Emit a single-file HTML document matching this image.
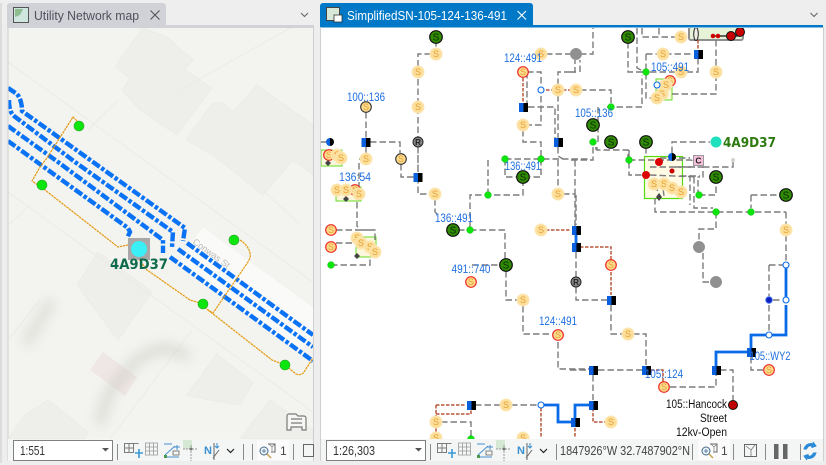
<!DOCTYPE html>
<html><head><meta charset="utf-8"><title>Map views</title>
<style>
html,body{margin:0;padding:0;background:#eeeeee;width:826px;height:465px;overflow:hidden}
svg{display:block;font-family:"Liberation Sans",sans-serif}
.d{fill:none;stroke:#7c7c7c;stroke-width:1.4;stroke-dasharray:6.5 3}
.b{fill:none;stroke:#b9573a;stroke-width:1.5;stroke-dasharray:3.5 1.5}
.u{fill:none;stroke:#0a6be8;stroke-width:2.8}
.c{fill:#fddf9c;stroke:#fde6b4;stroke-width:1;r:6px}
.r{fill:#fddc90;stroke:#ee2a20;stroke-width:1.2;r:5.3px}
.k{fill:#fddc90;stroke:#333;stroke-width:1.1;r:5.3px}
.g{fill:#2f8a04;stroke:#111;stroke-width:1.2;r:6.3px}
.gd{fill:#0ce60c;stroke:#19b819;stroke-width:.5;r:3.4px}
.gl{fill:#0ce60c;stroke:#2aa02a;stroke-width:.6}
.s{font-size:9px;fill:#e5a030;text-anchor:middle}
.sk{font-size:10px;fill:#0c2a00;text-anchor:middle}
.l{font-size:12px;fill:#1f6fe0;text-anchor:middle}
.t{font-size:11.5px;fill:#111;text-anchor:end}
.bl{fill:#0a5fdc}.bk{fill:#000}
.o{fill:#fff;stroke:#0a6be8;stroke-width:1.1}
.gr{fill:#909090;stroke:#999;stroke-width:.5;r:5.8px}
.dash{fill:none;stroke:#0a72f5;stroke-width:4.4;stroke-dasharray:9 2 3.500 2}
.or{fill:none;stroke:#e49a12;stroke-width:1.200;stroke-dasharray:2.500 .7}
.bd{fill:#eeeeea;stroke:#ebebe7;stroke-width:1}
.ic{fill:none;stroke:#7d7d7d;stroke-width:1}
.sep{stroke:#8a8a8a;stroke-width:1}
</style></head><body>
<svg width="826" height="465" viewBox="0 0 826 465" xmlns="http://www.w3.org/2000/svg">
<defs>
<clipPath id="lc"><rect x="8" y="28" width="305" height="411"/></clipPath>
<clipPath id="rc"><rect x="321" y="28" width="502" height="411"/></clipPath>
<filter id="bl" x="-40%" y="-40%" width="180%" height="180%"><feGaussianBlur stdDeviation="6"/></filter>
</defs>
<rect width="826" height="465" fill="#eeeeee"/>
<rect x="0" y="3" width="2" height="460" fill="#dcdcdc"/>

<!-- left tab -->
<path d="M7 25V6a3 3 0 0 1 3-3h153a3 3 0 0 1 3 3v19z" fill="#d1d2d8"/>
<rect x="7" y="25" width="307" height="3" fill="#d1d2d8"/>
<rect x="13.500" y="7.500" width="15" height="15" fill="#cfe6de" stroke="#555"/>
<path d="M15 9h8l-3 6-5 2z" fill="#8dbd8e"/>
<text x="34" y="20" font-size="13" fill="#50505c" textLength="105" lengthAdjust="spacingAndGlyphs">Utility Network map</text>
<path d="M150.500 10.500l9 9M159.500 10.500l-9 9" stroke="#555" stroke-width="1.100" fill="none"/>
<path d="M301 13l3.500 3.500 3.500-3.500" stroke="#666" stroke-width="1.100" fill="none"/>

<!-- left map -->
<rect x="8" y="28" width="305" height="411" fill="#f3f3ef"/>
<g clip-path="url(#lc)">
<path d="M190 245L313 335" stroke="#fafaf8" stroke-width="44" fill="none"/>
<polygon class="bd" points="143,28 167,37 193,60 185,70 212,88 177,135 140,110 122,90 130,78 115,67"/>
<polygon class="bd" points="213,103 223,103 233,112 257,85 313,125 313,175 293,160 263,195 213,155 186,140"/>
<polygon class="bd" points="98,252 152,292 118,340 77,285"/>
<polygon class="bd" points="217,354 253,383 240,405 210,400 187,395"/>
<polygon class="bd" points="48,400 88,432 85,439 8,439 25,415"/>
<polygon class="bd" points="270,400 313,430 313,439 240,439"/>
<polygon points="103,352 137,377 125,396 90,370" fill="#efe7e5"/>
<path d="M8 62L313 282M8 192L313 412M88 130L118 100M180 90L290 28M8 225L30 205M40 300L8 340M192 330L110 439M300 225L263 190" stroke="#e9e9e5" stroke-width=".8" fill="none"/>
<path d="M100 425Q105 390 125 375Q135 355 165 348L190 356" stroke="#bdbdb6" stroke-width="11" opacity=".4" fill="none" filter="url(#bl)"/>
<path d="M52 300L25 345" stroke="#bdbdb6" stroke-width="11" opacity=".35" fill="none" filter="url(#bl)"/>
<text transform="translate(192 243) rotate(36)" font-size="9" fill="#b9b9b9">Conwas St</text>
<path class="dash" d="M8 88L17 94Q22 100 22 111L93 162L185 228L183 241"/>
<path class="dash" d="M9 100Q9 112 14 116L75 162L173 232L172 247"/>
<path class="dash" d="M8 126L58 162L163 240L163 253"/>
<path class="dash" d="M8 141L37 162L128 228L130 232L127 238"/>
<path class="dash" d="M187 243L313 335"/>
<path class="dash" d="M178 249L313 347"/>
<path class="dash" d="M170 257L313 361"/>
<path class="or" d="M77 121L73 117L47 158L40 167L32 181L45 190L118 247L128 245L147 270L190 300L200 303L208 310L213 313L248 262Q251 257 250 253Q248 245 240 240"/>
<path class="or" d="M208 310L272 360L285 365L296 374Q301 376 304 372L313 358"/>
<circle class="gl" cx="79" cy="126" r="5"/><circle class="gl" cx="42" cy="185" r="5"/>
<circle class="gl" cx="234" cy="240" r="5"/><circle class="gl" cx="203" cy="304" r="5"/><circle class="gl" cx="285" cy="365" r="5"/>
<rect x="128" y="238" width="22" height="22" fill="#a8a8a8"/>
<circle cx="139" cy="249" r="8" fill="#38f0f5"/>
<text x="110" y="269" font-size="14.500" font-weight="bold" fill="#0e6b4c" style="font-family:'DejaVu Sans',sans-serif" textLength="58" lengthAdjust="spacingAndGlyphs">4A9D37</text>
<path d="M287 430v-14a2 2 0 0 1 2-2h7l2 2h6a2 2 0 0 1 2 2v12h-4v-3h-11v3zM291 419h11M291 423h11" fill="#f6f6f4" stroke="#7a7a7a" stroke-width="1.200"/>
</g>
<rect x="7.500" y="28" width="1" height="433" fill="#cfcfcf"/><rect x="313" y="28" width="1" height="433" fill="#cfcfcf"/>

<!-- right tab -->
<path d="M320 25V6a3 3 0 0 1 3-3h207a3 3 0 0 1 3 3v19z" fill="#0078c8"/>
<rect x="320" y="25" width="503" height="2.500" fill="#0078c8"/>
<rect x="326.500" y="7.500" width="13" height="13" fill="#d8e8d8" stroke="#444"/>
<rect x="334" y="15" width="8" height="7" fill="#fff" stroke="#333" stroke-width=".8"/>
<text x="347" y="20" font-size="13" fill="#fff" textLength="160" lengthAdjust="spacingAndGlyphs">SimplifiedSN-105-124-136-491</text>
<path d="M517.500 11l8.500 8.500M526 11l-8.500 8.500" stroke="#fff" stroke-width="1.100" fill="none"/>
<path d="M810.500 13l3.500 3.500 3.500-3.500" stroke="#666" stroke-width="1.100" fill="none"/>

<!-- right map -->
<rect x="321" y="27.500" width="502" height="412" fill="#fff"/>
<g clip-path="url(#rc)">
<rect x="321" y="150" width="21" height="16" fill="#fbf6dc" stroke="#66dd22"/>
<rect x="336" y="187" width="25" height="14" fill="#fbf6dc" stroke="#66dd22"/>
<rect x="356" y="237" width="20" height="20" fill="#fbf6dc" stroke="#66dd22"/>
<rect x="656" y="79" width="16" height="21" fill="#fbf6dc" stroke="#66dd22"/>
<rect x="644.500" y="156.500" width="38" height="42" fill="#fffbe4" stroke="#55dd11" stroke-width="1.200"/>
<rect x="689" y="27" width="54" height="13" rx="2" fill="#e6f3d6" stroke="#8f8f8f" stroke-width="2"/>

<path class="d" d="M436 40V54H418V172M418 177V194H435M435 199V212L437 214M418 147V172"/>
<path class="d" d="M366 112V138M366 146V154M370 142H400V153M401 164V177H414"/>
<path class="d" d="M359 163V187M364 159H359M357 202V226L360 230H375V243M336 230H375M336 243H355M331 265H370V257M321 142H326"/>
<path class="d" d="M546 54H572M527 72V105M527 72H541V125H528M523 130V142H541V158M528 107H555V138"/>
<path class="d" d="M558 95V138M558 85V72H575V60M505 159H590M558 147V156L563 159M488 160V194M470 228V195H523V183M505 159V177H518M541 159V177H530"/>
<path class="d" d="M558 160V190M563 194H575V226M575 160V194M576 195V225M576 252V277M576 287V300H607"/>
<path class="d" d="M458 230H466M470 230H505V260M472 265H500M506 271V300H518M523 306V334H551M558 342V369H592"/>
<path class="d" d="M580 54H593V28M580 72V60M570 72H576M580 90H611V103M607 107H642V75M598 107V142M596 150V147M597 147V150H628V159M593 147V160H570M629 150V160"/>
<path class="d" d="M628 42V72H645M637 28V68L645 72M642 28V37H676M659 28V35M646 54H693M646 54V98H652M698 58V72H687M650 72H676M672 94H716V78M716 40V67"/>
<path class="d" d="M646 147V157M672 153V142H710M629 160H690L703 162M629 162V175H646M650 175L700 177M650 167H703V180M703 167H733V162M660 158H690"/>
<path class="d" d="M694 177V208H713M699 195H716V183M690 175V205M698 180V195M655 198V212H786M751 195H781M751 195V208M786 212V225M786 235V262M716 212V229H699V242M703 253V282H710"/>
<path class="d" d="M769 265H783M769 265V296M773 300H782M769 305V332M751 357V370H763M720 370H733V400M670 387H716V373"/>
<path class="d" d="M611 305V334H623M633 334H646V365M570 370H589M598 370H642M593 375V400M475 405H501M511 405H538M441 422H471V437"/>
<path class="d" d="M655 185L660 196M662 180L664 196M675 167H695M680 176H700"/>

<path class="b" d="M523 78V103M546 90H553M563 90H570M546 230H571M580 247H611V260M611 272V295M698 40V50M651 370H663V383M593 408V422H605M575 428V438M436 405H466M436 405V417M436 414H471V408M436 428V433M541 408V438"/>
<path class="u" d="M576 233V244M786 268V297M786 305V335H751V352H716V368M541 405H558V422H575V405H593"/>

<circle class="g" cx="436" cy="37" r="6"/><text class="sk" x="436" y="40.500">S</text>
<circle class="g" cx="628" cy="37" r="6"/><text class="sk" x="628" y="40.500">S</text>
<circle class="g" cx="523" cy="177" r="6"/><text class="sk" x="523" y="180.500">S</text>
<circle class="g" cx="453" cy="230" r="6"/><text class="sk" x="453" y="233.500">S</text>
<circle class="g" cx="506" cy="265" r="6"/><text class="sk" x="506" y="268.500">S</text>
<circle class="g" cx="593" cy="125" r="6"/><text class="sk" x="593" y="128.500">S</text>
<circle class="g" cx="611" cy="142" r="6"/><text class="sk" x="611" y="145.500">S</text>
<circle class="g" cx="646" cy="142" r="6"/><text class="sk" x="646" y="145.500">S</text>
<circle class="g" cx="716" cy="177" r="6"/><text class="sk" x="716" y="180.500">S</text>
<circle class="g" cx="786" cy="195" r="6"/><text class="sk" x="786" y="198.500">S</text>

<circle class="gr" cx="576" cy="54" r="5.500"/><circle class="gr" cx="699" cy="247" r="5.500"/><circle class="gr" cx="716" cy="282" r="5.500"/>
<circle cx="418" cy="142" r="5" fill="#888" stroke="#222"/><text x="418" y="145" font-size="8" text-anchor="middle" font-weight="bold" fill="#222">R</text>
<circle cx="576" cy="282" r="5" fill="#888" stroke="#222"/><text x="576" y="285" font-size="8" text-anchor="middle" font-weight="bold" fill="#222">R</text>

<circle class="c" cx="436" cy="54" r="5.500"/><text class="s" x="436" y="57">S</text>
<circle class="c" cx="418" cy="72" r="5.500"/><text class="s" x="418" y="75">S</text>
<circle class="c" cx="418" cy="107" r="5.500"/><text class="s" x="418" y="110">S</text>
<circle class="k" cx="366" cy="107" r="5"/><text class="s" x="366" y="110">S</text>
<circle class="k" cx="401" cy="159" r="5"/><text class="s" x="401" y="162">S</text>
<circle class="c" cx="366" cy="159" r="5.500"/><text class="s" x="366" y="162">S</text>
<circle class="c" cx="435" cy="194" r="5.500"/><text class="s" x="435" y="197">S</text>
<circle class="c" cx="541" cy="54" r="5.500"/><text class="s" x="541" y="57">S</text>
<circle class="r" cx="523" cy="72" r="5"/><text class="s" x="523" y="75">S</text>
<circle class="c" cx="558" cy="90" r="5.500"/><text class="s" x="558" y="93">S</text>
<circle class="c" cx="576" cy="90" r="5.500"/><text class="s" x="576" y="93">S</text>
<circle class="c" cx="523" cy="125" r="5.500"/><text class="s" x="523" y="128">S</text>
<circle class="c" cx="558" cy="194" r="5.500"/><text class="s" x="558" y="197">S</text>
<circle class="c" cx="541" cy="230" r="5.500"/><text class="s" x="541" y="233">S</text>
<circle class="r" cx="471" cy="282" r="5"/><text class="s" x="471" y="285">S</text>
<circle class="c" cx="523" cy="300" r="5.500"/><text class="s" x="523" y="303">S</text>
<circle class="r" cx="558" cy="335" r="5"/><text class="s" x="558" y="338">S</text>
<circle class="r" cx="611" cy="265" r="5"/><text class="s" x="611" y="268">S</text>
<circle class="c" cx="628" cy="334" r="5.500"/><text class="s" x="628" y="337">S</text>
<circle class="r" cx="664" cy="387" r="5"/><text class="s" x="664" y="390">S</text>
<circle class="r" cx="769" cy="370" r="5"/><text class="s" x="769" y="373">S</text>
<circle class="c" cx="611" cy="422" r="5.500"/><text class="s" x="611" y="425">S</text>
<circle class="c" cx="506" cy="405" r="5.500"/><text class="s" x="506" y="408">S</text>
<circle class="c" cx="436" cy="422" r="5.500"/><text class="s" x="436" y="425">S</text>
<circle class="c" cx="436" cy="438" r="5.500"/><text class="s" x="436" y="441">S</text>
<circle class="c" cx="523" cy="438" r="5.500"/><text class="s" x="523" y="441">S</text>
<circle class="c" cx="681" cy="37" r="5.500"/><text class="s" x="681" y="40">S</text>
<circle class="c" cx="663" cy="54" r="5.500"/><text class="s" x="663" y="57">S</text>
<circle class="c" cx="681" cy="72" r="5.500"/><text class="s" x="681" y="75">S</text>
<circle class="c" cx="716" cy="72" r="5.500"/><text class="s" x="716" y="75">S</text>
<circle class="c" cx="786" cy="230" r="5.500"/><text class="s" x="786" y="233">S</text>
<circle class="r" cx="670" cy="81" r="5"/><text class="s" x="670" y="84">S</text>
<circle class="c" cx="666" cy="85" r="5"/><text class="s" x="666" y="88">S</text>
<circle class="c" cx="662" cy="94" r="5"/><text class="s" x="662" y="97">S</text>
<circle class="c" cx="657" cy="98" r="5"/><text class="s" x="657" y="101">S</text>
<circle class="o" cx="657" cy="85" r="3"/>
<circle class="r" cx="329" cy="155" r="5"/><text class="s" x="329" y="158">S</text>
<circle class="c" cx="337" cy="155" r="5"/><text class="s" x="337" y="158">S</text>
<circle class="c" cx="341" cy="158" r="5"/><text class="s" x="341" y="161">S</text>
<circle class="r" cx="355" cy="190" r="5"/><text class="s" x="355" y="193">S</text>
<circle class="c" cx="337" cy="190" r="5"/><text class="s" x="337" y="193">S</text>
<circle class="c" cx="346" cy="190" r="5"/><text class="s" x="346" y="193">S</text>
<circle class="c" cx="359" cy="194" r="5"/><text class="s" x="359" y="197">S</text>
<circle class="r" cx="331" cy="230" r="5"/><text class="s" x="331" y="233">S</text>
<circle class="r" cx="331" cy="247" r="5"/><text class="s" x="331" y="250">S</text>
<circle class="c" cx="357" cy="238" r="5"/><text class="s" x="357" y="241">S</text>
<circle class="c" cx="361" cy="243" r="5"/><text class="s" x="361" y="246">S</text>
<circle class="c" cx="370" cy="247" r="5"/><text class="s" x="370" y="250">S</text>
<circle class="c" cx="375" cy="252" r="5"/><text class="s" x="375" y="255">S</text>
<circle class="c" cx="654" cy="184" r="5"/><text class="s" x="654" y="187">S</text>
<circle class="c" cx="664" cy="184" r="5"/><text class="s" x="664" y="187">S</text>
<circle class="c" cx="672" cy="188" r="5"/><text class="s" x="672" y="191">S</text>
<circle class="c" cx="681" cy="192" r="5"/><text class="s" x="681" y="195">S</text>

<path fill="#444" d="M325 163l3-3 3 3-3 3zM343 199l3-3 3 3-3 3zM354 256l3-3 3 3-3 3zM656 197l3-4 3 4-3 4z"/>

<circle class="gd" cx="505" cy="159" r="3.200"/><circle class="gd" cx="541" cy="159" r="3.200"/>
<circle class="gd" cx="488" cy="195" r="3.200"/><circle class="gd" cx="470" cy="230" r="3.200"/>
<circle class="gd" cx="331" cy="265" r="3.200"/><circle class="gd" cx="611" cy="107" r="3.200"/>
<circle class="gd" cx="646" cy="72" r="3.200"/><circle class="gd" cx="593" cy="142" r="3.200"/>
<circle class="gd" cx="629" cy="160" r="3.200"/><circle class="gd" cx="699" cy="195" r="3.200"/>
<circle class="gd" cx="716" cy="212" r="3.200"/><circle class="gd" cx="751" cy="212" r="3.200"/>
<circle class="gd" cx="471" cy="439" r="3.200"/>

<rect class="bl" x="361.500" y="138" width="4.500" height="9"/><rect class="bk" x="366" y="138" width="4.500" height="9"/>
<rect class="bl" x="413.500" y="173" width="4.500" height="9"/><rect class="bk" x="418" y="173" width="4.500" height="9"/>
<rect class="bl" x="519" y="103" width="4.500" height="9"/><rect class="bk" x="523.500" y="103" width="4.500" height="9"/>
<rect class="bl" x="554" y="138" width="4.500" height="9"/><rect class="bk" x="558.500" y="138" width="4.500" height="9"/>
<rect class="bl" x="572" y="226" width="4.500" height="9"/><rect class="bk" x="576.500" y="226" width="4.500" height="9"/>
<rect class="bl" x="572" y="243" width="4.500" height="9"/><rect class="bk" x="576.500" y="243" width="4.500" height="9"/>
<rect class="bl" x="607" y="296" width="4.500" height="9"/><rect class="bk" x="611.500" y="296" width="4.500" height="9"/>
<rect class="bl" x="589" y="366" width="4.500" height="9"/><rect class="bk" x="593.500" y="366" width="4.500" height="9"/>
<rect class="bl" x="642" y="366" width="4.500" height="9"/><rect class="bk" x="646.500" y="366" width="4.500" height="9"/>
<rect class="bl" x="712" y="366" width="4.500" height="9"/><rect class="bk" x="716.500" y="366" width="4.500" height="9"/>
<rect class="bl" x="747" y="348" width="4.500" height="9"/><rect class="bk" x="751.500" y="348" width="4.500" height="9"/>
<rect class="bl" x="589" y="401" width="4.500" height="9"/><rect class="bk" x="593.500" y="401" width="4.500" height="9"/>
<rect class="bl" x="571" y="418" width="4.500" height="9"/><rect class="bk" x="575.500" y="418" width="4.500" height="9"/>
<rect class="bl" x="467" y="401" width="4.500" height="9"/><rect class="bk" x="471.500" y="401" width="4.500" height="9"/>
<rect class="bl" x="694" y="50" width="4.500" height="9"/><rect class="bk" x="698.500" y="50" width="4.500" height="9"/>

<path class="bl" d="M330 138a4 4 0 0 0 0 8z"/><path class="bk" d="M330 138a4 4 0 0 1 0 8z"/>
<path class="bl" d="M672 153a4 4 0 0 0 0 8z"/><path class="bk" d="M672 153a4 4 0 0 1 0 8z"/>

<circle class="o" cx="541" cy="90" r="3"/><circle class="o" cx="541" cy="405" r="3"/>
<circle class="o" cx="786" cy="265" r="3"/><circle class="o" cx="786" cy="300" r="3"/><circle class="o" cx="769" cy="335" r="3"/>
<circle cx="769" cy="300" r="3.200" fill="#1020c0" stroke="#3a6ae8"/>

<circle cx="659" cy="162" r="4" fill="#dd0000"/><circle cx="646" cy="175" r="4" fill="#dd0000"/><circle cx="672" cy="171" r="2.500" fill="#c80000"/>
<path d="M713 36H738" stroke="#111" stroke-width="1.200"/>
<circle cx="713" cy="36" r="2.300" fill="#cc0000"/><circle cx="718" cy="36" r="2.300" fill="#cc0000"/>
<circle cx="731" cy="36" r="4.500" fill="#c80000" stroke="#111"/><circle cx="740" cy="32" r="4.500" fill="#c80000" stroke="#111"/>
<ellipse cx="696" cy="34" rx="2.300" ry="6.500" fill="#f0f0e6" stroke="#222"/>
<circle cx="733" cy="405" r="4.500" fill="#c00000" stroke="#111"/>
<rect x="693.500" y="155.500" width="10" height="10" fill="#f7c0dc" stroke="#999"/><text x="698.500" y="163.500" font-size="8.500" font-weight="bold" text-anchor="middle" fill="#222">C</text>
<circle cx="733" cy="160" r="2" fill="#d4d4cc"/>
<circle cx="716" cy="142" r="5.500" fill="#1ee0bd"/>
<text x="723" y="147" font-size="13" font-weight="bold" fill="#2d7a10" style="font-family:'DejaVu Sans',sans-serif" textLength="53" lengthAdjust="spacingAndGlyphs">4A9D37</text>

<text class="l" x="366" y="101" textLength="38" lengthAdjust="spacingAndGlyphs">100::136</text>
<text class="l" x="523" y="62" textLength="38" lengthAdjust="spacingAndGlyphs">124::491</text>
<text class="l" x="670" y="71" textLength="38" lengthAdjust="spacingAndGlyphs">105::491</text>
<text class="l" x="594" y="117" textLength="38" lengthAdjust="spacingAndGlyphs">105::136</text>
<text class="l" x="523" y="170" textLength="36" lengthAdjust="spacingAndGlyphs">136::491</text>
<text class="l" x="355" y="181" textLength="32" lengthAdjust="spacingAndGlyphs">136:54</text>
<text class="l" x="454" y="222" textLength="38" lengthAdjust="spacingAndGlyphs">136::491</text>
<text class="l" x="471" y="273" textLength="39" lengthAdjust="spacingAndGlyphs">491::740</text>
<text class="l" x="558" y="325" textLength="38" lengthAdjust="spacingAndGlyphs">124::491</text>
<text class="l" x="664" y="378" textLength="38" lengthAdjust="spacingAndGlyphs">105::124</text>
<text class="l" x="770" y="360" textLength="41" lengthAdjust="spacingAndGlyphs">105::WY2</text>
<text class="t" x="727" y="408" textLength="61" lengthAdjust="spacingAndGlyphs">105::Hancock</text>
<text class="t" x="727" y="422" textLength="27" lengthAdjust="spacingAndGlyphs">Street</text>
<text class="t" x="727" y="436" textLength="51" lengthAdjust="spacingAndGlyphs">12kv-Open</text>
</g>
<rect x="320" y="27" width="1" height="434" fill="#cfcfcf"/><rect x="823" y="27" width="1" height="434" fill="#cfcfcf"/>

<!-- toolbars -->
<rect x="8" y="439" width="305" height="22" fill="#f3f6f5"/>
<rect x="321" y="439" width="502" height="22" fill="#f3f6f5"/>

<rect x="13.500" y="440.500" width="99" height="20" fill="#fff" stroke="#808080"/>
<text x="20" y="455" font-size="13" fill="#333" textLength="25" lengthAdjust="spacingAndGlyphs">1:551</text>
<path d="M102 448h7l-3.500 3.500z" fill="#555"/>
<path class="sep" d="M117.500 444V460"/>
<g>
<path class="ic" d="M124.500 443.500h9v9h-9zM124.500 448h9M129 443.500v9M133.500 443.500h5"/><path d="M135 453h8M139 449v9" stroke="#3a9ad8" stroke-width="1.600"/>
<path d="M145.500 443h12v12h-12zM145.500 447h12M145.500 451h12M149.500 443v12M153.500 443v12" fill="none" stroke="#999" stroke-width=".8"/>
<path d="M164 457h15M165 455l10-9M172 444h-8M177 445v5M174 447h6" stroke="#4a8fcf" fill="none"/><rect x="164" y="455" width="3" height="3" fill="#4a9a4a"/><rect x="173" y="451" width="6" height="4" fill="none" stroke="#666" stroke-width=".8"/>
<rect x="183" y="440" width="9" height="9" fill="#d5e8d3"/><path d="M183 449h15M191 445v16" stroke="#999" stroke-dasharray="2 1" fill="none"/><circle cx="191" cy="449" r="1.500" fill="#777"/>
<text x="204" y="454" font-size="11" font-weight="bold" fill="#3a8fd0">N</text><path d="M214 443v17M213 458l6-8" stroke="#666" fill="none"/><path d="M217 443v5M215 446l2 2 2-2" stroke="#3a8fd0" fill="none"/>
<path d="M227 449l3.500 3.500 3.500-3.500" stroke="#222" stroke-width="1.200" fill="none"/>
</g>
<path class="sep" d="M243.500 444V460M252.500 444V460M293.500 444V460"/>
<rect x="257" y="440" width="32" height="20" fill="#fbfbfb"/>
<circle cx="264" cy="451" r="4" fill="#e8f3fb" stroke="#4a6a8a"/><path d="M262 451h4M264 449v4" stroke="#4a6a8a" stroke-width=".8"/><path d="M267 454l4 4" stroke="#c9a34a" stroke-width="1.500"/>
<path d="M268 444h7v8h-4" fill="none" stroke="#666"/><path d="M269 444l3 3 3-3M272 447v4" fill="none" stroke="#777" stroke-width=".7"/>
<text x="280" y="455" font-size="12" fill="#444">1</text>
<rect x="303.500" y="444.500" width="10" height="12" fill="none" stroke="#666"/>

<rect x="326.500" y="440.500" width="99" height="20" fill="#fff" stroke="#808080"/>
<text x="333" y="455" font-size="13" fill="#333" textLength="42" lengthAdjust="spacingAndGlyphs">1:26,303</text>
<path d="M415 448h7l-3.500 3.500z" fill="#555"/>
<path class="sep" d="M430.500 444V460"/>
<g transform="translate(313 0)">
<path class="ic" d="M124.500 443.500h9v9h-9zM124.500 448h9M129 443.500v9M133.500 443.500h5"/><path d="M135 453h8M139 449v9" stroke="#3a9ad8" stroke-width="1.600"/>
<path d="M145.500 443h12v12h-12zM145.500 447h12M145.500 451h12M149.500 443v12M153.500 443v12" fill="none" stroke="#999" stroke-width=".8"/>
<path d="M164 457h15M165 455l10-9M172 444h-8M177 445v5M174 447h6" stroke="#4a8fcf" fill="none"/><rect x="164" y="455" width="3" height="3" fill="#4a9a4a"/><rect x="173" y="451" width="6" height="4" fill="none" stroke="#666" stroke-width=".8"/>
<rect x="183" y="440" width="9" height="9" fill="#d5e8d3"/><path d="M183 449h15M191 445v16" stroke="#999" stroke-dasharray="2 1" fill="none"/><circle cx="191" cy="449" r="1.500" fill="#777"/>
<text x="204" y="454" font-size="11" font-weight="bold" fill="#3a8fd0">N</text><path d="M214 443v17M213 458l6-8" stroke="#666" fill="none"/><path d="M217 443v5M215 446l2 2 2-2" stroke="#3a8fd0" fill="none"/>
<path d="M227 449l3.500 3.500 3.500-3.500" stroke="#222" stroke-width="1.200" fill="none"/>
</g>
<path class="sep" d="M556.500 444V460M692.500 444V460M733.500 444V460M765.500 444V460M800.500 444V460"/>
<text x="560" y="455" font-size="12.500" fill="#444" textLength="130" lengthAdjust="spacingAndGlyphs">1847926°W 32.7487902°N</text>
<rect x="698" y="440" width="32" height="20" fill="#fbfbfb"/>
<circle cx="706" cy="451" r="4" fill="#e8f3fb" stroke="#4a6a8a"/><path d="M704 451h4M706 449v4" stroke="#4a6a8a" stroke-width=".8"/><path d="M709 454l4 4" stroke="#c9a34a" stroke-width="1.500"/>
<path d="M710 444h7v8h-4" fill="none" stroke="#666"/><path d="M711 444l3 3 3-3M714 447v4" fill="none" stroke="#777" stroke-width=".7"/>
<text x="721" y="455" font-size="12" fill="#444">1</text>
<rect x="744.500" y="444.500" width="12" height="12" fill="none" stroke="#666"/><path d="M746 446l5 4 4-5M751 450v6" stroke="#777" fill="none" stroke-width=".8"/>
<rect x="774" y="444" width="4.500" height="15" fill="#666"/><rect x="783" y="444" width="4.500" height="15" fill="#666"/>
<path d="M804 449q2-6 8-5.500l2 1.500-1-3 3 4-4 1.500-.5-1.500q-3-1-5 3zM816 453q-2 6-8 5.500l-2-1.500 1 3-3-4 4-1.500.5 1.500q3 1 5-3z" fill="#2a8ad8" stroke="#2a8ad8"/>
</svg>
</body></html>
